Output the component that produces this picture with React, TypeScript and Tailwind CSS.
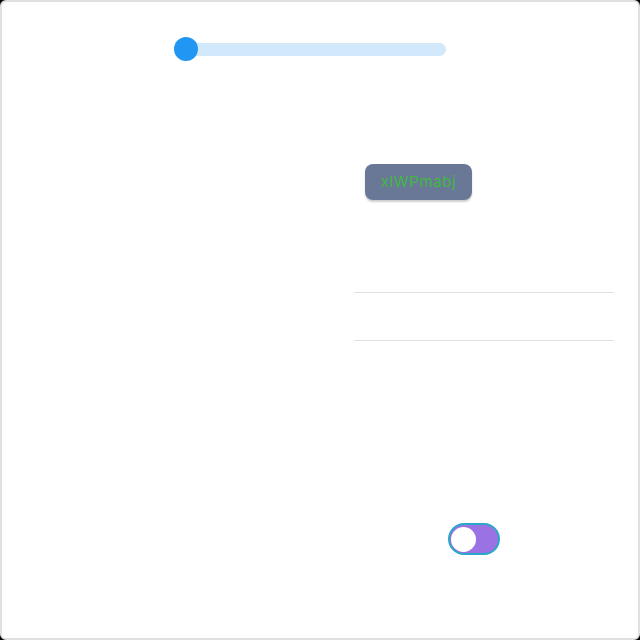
import React from "react";

export default function App() {
  return (
    <div className="w-[640px] h-[640px] bg-black">
      <div className="w-full h-full rounded-[6px] border-2 border-[#e0e0e0] bg-white flex flex-col" style={{ fontFamily: 'Inter, "Noto Sans", sans-serif' }}>
        {/* slider */}
        <div className="pt-[35px] pl-[172px]">
          <div className="relative w-[272px] h-[24px] pt-[6px]">
            <div className="ml-[2px] h-[13px] w-[270px] rounded-full bg-[#d2e8fb]" />
            <div className="absolute left-0 top-0 w-6 h-6 rounded-full bg-[#2196f3]" />
          </div>
        </div>
        {/* button */}
        <div className="mt-[103px] ml-[363px]">
          <button className="w-[107px] h-[36px] rounded-[8px] bg-[#6a7898] text-[#3fb83f] text-[15px] tracking-[0.6px] shadow-[0_2px_2px_rgba(0,0,0,0.2)] flex items-center justify-center">
            xlWPmabj
          </button>
        </div>
        {/* lines */}
        <div className="mt-[92px] ml-[352px] w-[260px] border-t border-[#e0e0e0]" />
        <div className="mt-[47px] ml-[352px] w-[260px] border-t border-[#e0e0e0]" />
        {/* toggle */}
        <div className="mt-[182px] ml-[446px]">
          <div className="w-[52px] h-[32px] rounded-full bg-[#9b72e3] border-2 border-[#2aa8c9] flex items-center pl-[1px]">
            <div className="w-[25px] h-[25px] rounded-full bg-white" />
          </div>
        </div>
      </div>
    </div>
  );
}
